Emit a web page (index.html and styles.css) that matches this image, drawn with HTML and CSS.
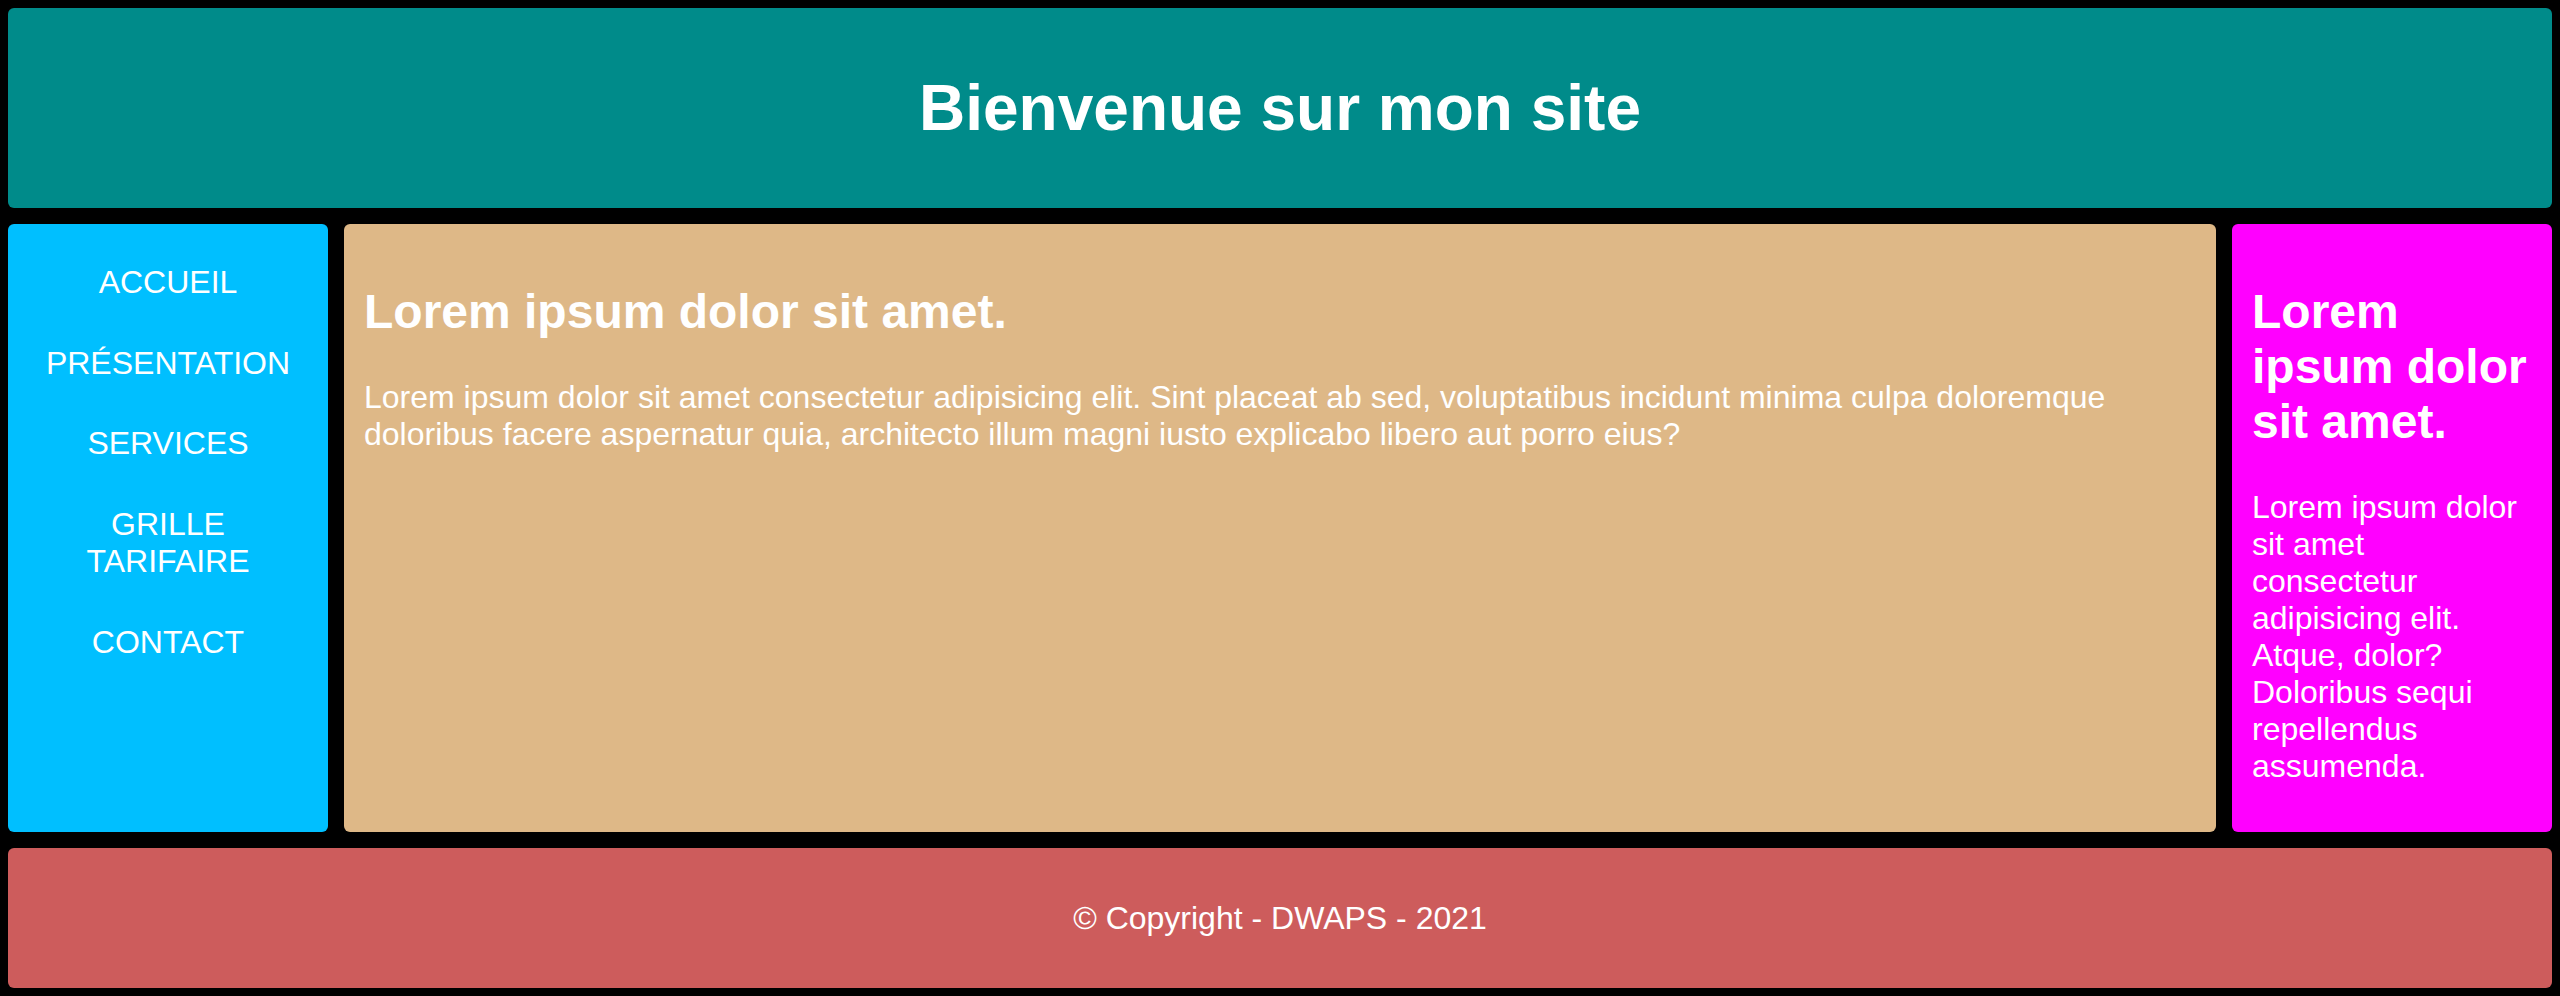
FILE: index.html
```html
<!DOCTYPE html>
<html lang="fr">
<head>
<meta charset="utf-8">
<title>Bienvenue sur mon site</title>
<link rel="stylesheet" href="styles.css">
</head>
<body>
<div class="page">
  <header class="site-header">
    <h1>Bienvenue sur mon site</h1>
  </header>
  <nav class="site-nav">
    <ul>
      <li><a href="#">ACCUEIL</a></li>
      <li><a href="#">PRÉSENTATION</a></li>
      <li><a href="#">SERVICES</a></li>
      <li><a href="#">GRILLE TARIFAIRE</a></li>
      <li><a href="#">CONTACT</a></li>
    </ul>
  </nav>
  <main class="site-main">
    <h2>Lorem ipsum dolor sit amet.</h2>
    <p>Lorem ipsum dolor sit amet consectetur adipisicing elit. Sint placeat ab sed, voluptatibus incidunt minima culpa doloremque doloribus facere aspernatur quia, architecto illum magni iusto explicabo libero aut porro eius?</p>
  </main>
  <aside class="site-aside">
    <h2>Lorem ipsum dolor sit amet.</h2>
    <p>Lorem ipsum dolor sit amet consectetur adipisicing elit. Atque, dolor? Doloribus sequi repellendus assumenda.</p>
  </aside>
  <footer class="site-footer">
    <p>© Copyright - DWAPS - 2021</p>
  </footer>
</div>
</body>
</html>
```
FILE: styles.css
```css
html, body {
  background: #000;
}
body {
  margin: 8px;
  font-family: "Liberation Sans", Arial, Helvetica, sans-serif;
  font-size: 32px;
  color: #fff;
}
.page {
  display: grid;
  grid-template-columns: 320px 1fr 320px;
  grid-template-rows: 200px 608px 140px;
  gap: 16px;
}
.site-header,
.site-nav,
.site-main,
.site-aside,
.site-footer {
  border-radius: 6px;
}
.site-header {
  grid-column: 1 / 4;
  background: #008b8a;
  display: flex;
  align-items: center;
  justify-content: center;
}
.site-header h1 {
  margin: 0;
  font-size: 64px;
  font-weight: bold;
}
.site-nav {
  background: #00bfff;
  padding: 40px 20px 20px;
}
.site-nav ul {
  list-style: none;
  margin: 0;
  padding: 0;
  display: flex;
  flex-direction: column;
  gap: 43.7px;
  text-align: center;
}
.site-nav a {
  color: #fff;
  text-decoration: none;
}
.site-main {
  background: #deb887;
  padding: 20px;
}
.site-aside {
  background: #ff00ff;
  padding: 20px;
}
.site-main h2,
.site-aside h2 {
  font-size: 48px;
  margin: 39.8px 0;
}
.site-main p,
.site-aside p {
  margin: 32px 0;
}
.site-footer {
  grid-column: 1 / 4;
  background: #cd5c5c;
  display: flex;
  align-items: center;
  justify-content: center;
}
.site-footer p {
  margin: 0;
}
```
